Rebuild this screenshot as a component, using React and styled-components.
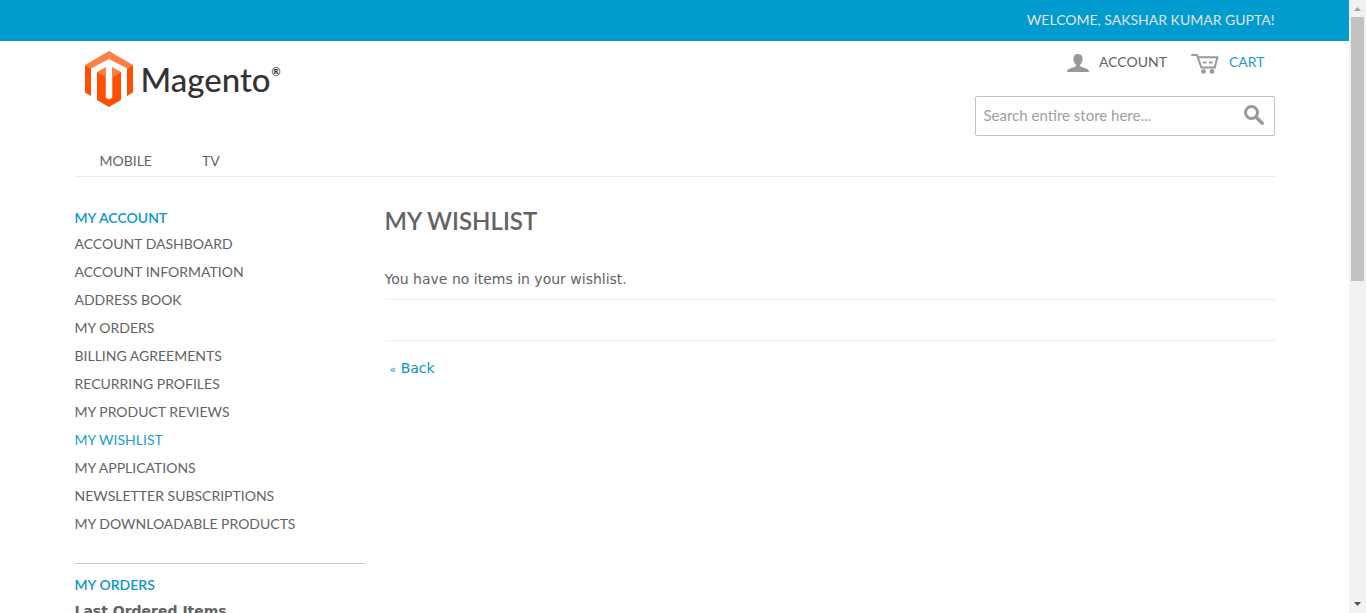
import React from "react";
import styled, { createGlobalStyle } from "styled-components";

const display = 'Lato, "Open Sans", sans-serif';
const body = '"DejaVu Sans", Verdana, sans-serif';

const GlobalStyle = createGlobalStyle`
  *, *::before, *::after { box-sizing: border-box; }
  body {
    margin: 0;
    background: #fff;
    color: #636363;
    font-family: ${body};
    font-size: 14px;
    line-height: 20px;
  }
  h1, h2, h3, p, ul { margin: 0; padding: 0; }
  ul { list-style: none; }
  a { color: inherit; text-decoration: none; }
`;

const Shell = styled.div`
  display: flex;
  height: 100vh;
  overflow: hidden;
`;

const Page = styled.div`
  flex: 1;
  min-width: 0;
  overflow: hidden;
`;

const Container = styled.div`
  width: 100%;
  max-width: 1200px;
  margin: 0 auto;
`;

const TopBar = styled.div`
  background: #009bcf;
`;

const Welcome = styled.p`
  padding: 10px 0 11px;
  color: #e4e4e4;
  font: 400 14px/20px ${display};
  text-align: right;
  text-transform: uppercase;
`;

const Header = styled.header`
  display: flex;
  justify-content: space-between;
  padding: 10px 0;
`;

const Logo = styled.a`
  display: flex;
  align-items: flex-start;
  padding-left: 10px;
  height: 56px;
  color: #333;
`;

const LogoMark = styled.svg`
  display: block;
  width: 48px;
  height: 56px;
`;

const LogoText = styled.span`
  padding: 8px 0 0 8px;
  font: 500 33px/40px ${display};
`;

const Registered = styled.span`
  padding: 15px 0 0 1px;
  font: 700 11px/12px ${display};
`;

const HeaderTools = styled.div`
  display: flex;
  flex-direction: column;
  width: 300px;
`;

const QuickLinks = styled.nav`
  display: flex;
  justify-content: flex-end;
  gap: 24px;
  padding-right: 10px;
`;

const QuickLink = styled.a`
  display: flex;
  gap: 10px;
  color: ${(p) => (p.$active ? "#1b9bd1" : "#636363")};
  font: 400 14px/22px ${display};
  text-transform: uppercase;

  svg { display: block; margin-top: 2px; }
`;

const SearchBox = styled.form`
  display: flex;
  height: 40px;
  margin-top: 22px;
  border: 1px solid #c0c0c0;
  border-radius: 2px;
`;

const SearchInput = styled.input`
  flex: 1;
  min-width: 0;
  padding: 0 8px 2px;
  border: 0;
  background: none;
  color: #636363;
  font: 400 15px/20px ${display};

  &::placeholder { color: #a0a0a0; opacity: 1; }
`;

const SearchButton = styled.button`
  width: 40px;
  padding: 8px 10px 10px;
  border: 0;
  background: none;

  svg { display: block; }
`;

const MainNav = styled.nav`
  display: flex;
  gap: 50px;
  padding: 5px 25px;
  border-bottom: 1px solid #ededed;
  font: 400 14px/20px ${display};
  text-transform: uppercase;
`;

const Columns = styled.div`
  display: grid;
  grid-template-columns: 290px minmax(0, 1fr);
  gap: 20px;
  padding-top: 30px;
`;

const Block = styled.section`
  & + & {
    margin-top: 25px;
    padding-top: 10px;
    border-top: 1px solid #cccccc;
  }
`;

const BlockTitle = styled.h2`
  padding-bottom: 1px;
  color: #0a96cf;
  font: 600 14px/22px ${display};
  text-transform: uppercase;
`;

const MenuItem = styled.li`
  color: ${(p) => (p.$current ? "#1ba0d2" : "#636363")};
  font: 400 14px/28px ${display};
  text-transform: uppercase;
`;

const BlockSubtitle = styled.h3`
  padding-top: 4px;
  font: 700 14px/20px ${body};
`;

const PageTitle = styled.h1`
  font: 600 24px/28px ${display};
  text-transform: uppercase;
`;

const EmptyMessage = styled.p`
  margin-top: 34px;
  padding-bottom: 10px;
  border-bottom: 1px solid #ededed;
`;

const Actions = styled.div`
  margin-top: 40px;
  padding: 17px 5px;
  border-top: 1px solid #ededed;
  color: #0a93cc;

  small { font-size: 11px; }
`;

const ScrollTrack = styled.div`
  display: flex;
  flex-direction: column;
  align-items: center;
  justify-content: space-between;
  width: 17px;
  background: #f1f1f1;

  svg { display: block; flex: none; }
`;

const ScrollBody = styled.div`
  flex: 1;
  width: 13px;
`;

const ScrollThumb = styled.div`
  height: 45.600%;
  background: #c1c1c1;
`;

const accountLinks = [
  "Account Dashboard",
  "Account Information",
  "Address Book",
  "My Orders",
  "Billing Agreements",
  "Recurring Profiles",
  "My Product Reviews",
  "My Wishlist",
  "My Applications",
  "Newsletter Subscriptions",
  "My Downloadable Products",
];

function MagentoMark() {
  return (
    <LogoMark viewBox="0 0 48 56" aria-hidden="true">
      <path fill="#ff8044" d="M24 0 48 14 42 17.500 24 8 6 17.500 0 14z" />
      <path fill="#ff5000" d="M0 14 6 17.500V45L0 41.500zM48 14 42 17.500V45l6-3.500z" />
      <path
        fill="#ff5000"
        d="M12 21.300 20.700 16.300V46.500L24 48.500 27.300 46.500V16.300L36 21.300V49L24 56 12 49z"
      />
      <path fill="#ff8044" d="M12 21.300 20.700 16.300v10zM36 21.300 27.300 16.300v10z" />
    </LogoMark>
  );
}

function PersonIcon() {
  return (
    <svg width="22" height="20" viewBox="0 0 22 20" aria-hidden="true">
      <path
        fill="#999"
        d="M11 1c3.200 0 4.800 2 4.600 5-.1 2.400-1 4.500-2.500 5.700v1.600c1 .9 3.400 1.300 5.600 2.200 2.300.8 3.300 1.500 3.300 3.500H0c0-2 1-2.700 3.300-3.500 2.200-.9 4.600-1.300 5.600-2.200v-1.600C7.400 10.500 6.500 8.400 6.400 6 6.200 3 7.800 1 11 1z"
      />
    </svg>
  );
}

function CartIcon() {
  return (
    <svg width="28" height="21" viewBox="0 0 28 21" aria-hidden="true">
      <g fill="none" stroke="#999" strokeWidth="2" strokeLinecap="round" strokeLinejoin="round">
        <path d="M1 2h5l4.300 12.500h13.400" />
        <path d="M7 4.200h19.500l-2.800 10.300" />
        <path d="M12 9.500h3.500M18 9.500h3.500" strokeLinecap="butt" />
      </g>
      <circle cx="12.500" cy="18.400" r="2.300" fill="#999" />
      <circle cx="21" cy="18.400" r="2.300" fill="#999" />
    </svg>
  );
}

function SearchIcon() {
  return (
    <svg width="20" height="20" viewBox="0 0 20 20" aria-hidden="true">
      <circle cx="7.500" cy="7.500" r="6" fill="none" stroke="#999" strokeWidth="3" />
      <path d="M12 12l6.200 6.200" stroke="#999" strokeWidth="3.500" strokeLinecap="round" />
    </svg>
  );
}

export default function App() {
  return (
    <>
      <GlobalStyle />
      <Shell>
        <Page>
          <TopBar>
            <Container>
              <Welcome>Welcome, Sakshar Kumar Gupta!</Welcome>
            </Container>
          </TopBar>

          <Container>
            <Header>
              <Logo href="#">
                <MagentoMark />
                <LogoText>Magento</LogoText>
                <Registered>®</Registered>
              </Logo>
              <HeaderTools>
                <QuickLinks>
                  <QuickLink href="#">
                    <PersonIcon />
                    Account
                  </QuickLink>
                  <QuickLink href="#" $active>
                    <CartIcon />
                    Cart
                  </QuickLink>
                </QuickLinks>
                <SearchBox role="search">
                  <SearchInput
                    type="search"
                    aria-label="Search"
                    placeholder="Search entire store here..."
                  />
                  <SearchButton type="button" aria-label="Search">
                    <SearchIcon />
                  </SearchButton>
                </SearchBox>
              </HeaderTools>
            </Header>

            <MainNav>
              <a href="#">Mobile</a>
              <a href="#">TV</a>
            </MainNav>

            <Columns>
              <aside>
                <Block>
                  <BlockTitle>My Account</BlockTitle>
                  <ul>
                    {accountLinks.map((label) => (
                      <MenuItem key={label} $current={label === "My Wishlist"}>
                        <a href="#">{label}</a>
                      </MenuItem>
                    ))}
                  </ul>
                </Block>
                <Block>
                  <BlockTitle>My Orders</BlockTitle>
                  <BlockSubtitle>Last Ordered Items</BlockSubtitle>
                </Block>
              </aside>

              <main>
                <PageTitle>My Wishlist</PageTitle>
                <EmptyMessage>You have no items in your wishlist.</EmptyMessage>
                <Actions>
                  <a href="#">
                    <small>«</small> Back
                  </a>
                </Actions>
              </main>
            </Columns>
          </Container>
        </Page>

        <ScrollTrack aria-hidden="true">
          <svg width="17" height="17" viewBox="0 0 17 17">
            <path fill="#a3a3a3" d="M5 11h7L8.500 7z" />
          </svg>
          <ScrollBody>
            <ScrollThumb />
          </ScrollBody>
          <svg width="17" height="17" viewBox="0 0 17 17">
            <path fill="#505050" d="M5 6h7l-3.500 4z" />
          </svg>
        </ScrollTrack>
      </Shell>
    </>
  );
}
